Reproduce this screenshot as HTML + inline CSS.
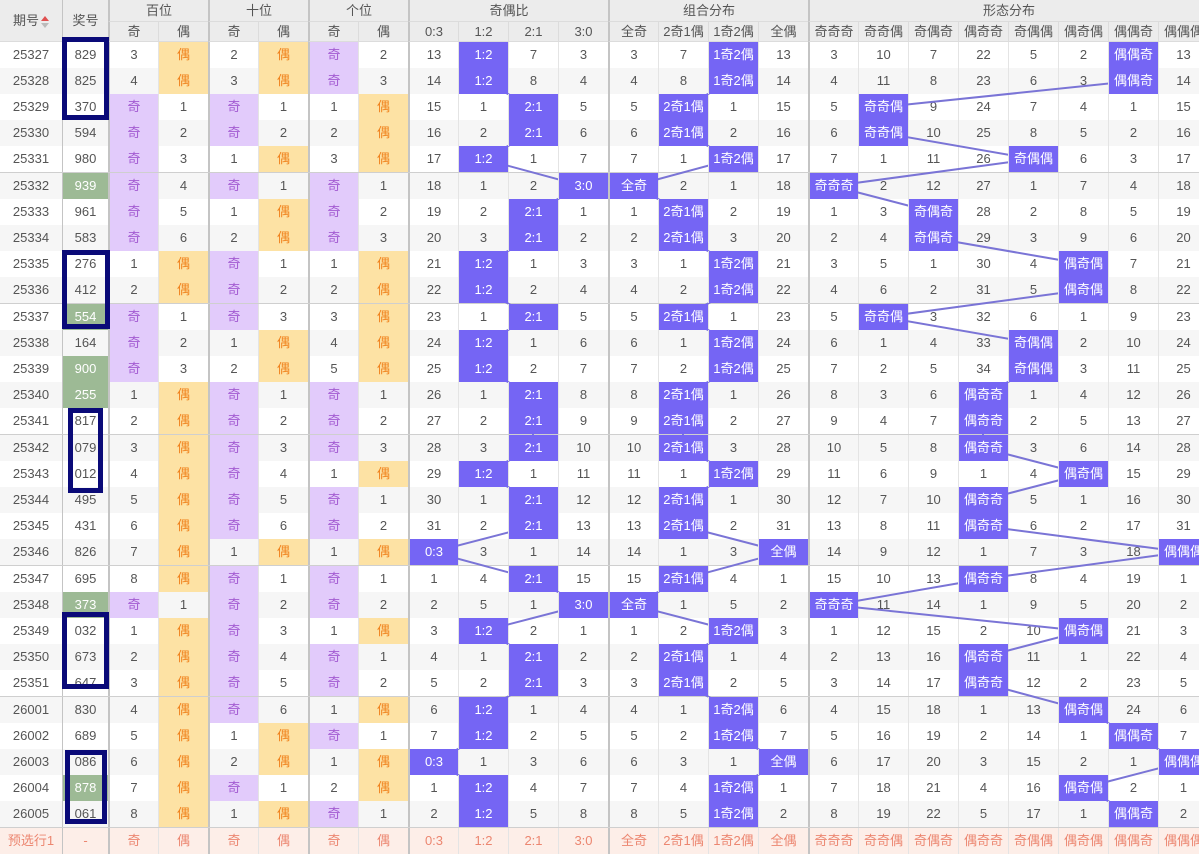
<!DOCTYPE html>
<html><head><meta charset="utf-8"><style>
*{margin:0;padding:0;box-sizing:border-box}
body{width:1199px;height:857px;overflow:hidden;background:#fff;font-family:"Liberation Sans","Noto Sans CJK SC",sans-serif;font-size:13px;color:#555;position:relative}
.hd{position:absolute;background:#ececec;text-align:center;color:#555;border-left:1px solid #dcdcdc;border-bottom:1px solid #dcdcdc}
.hd.g{border-left:2px solid #c4c4c4}
#body{position:absolute;left:0;top:42px;width:1220px}
.r{display:flex;height:26px;background:#fff}
.r:nth-child(even){background:#f6f6f6}
.r.e{height:27px;border-bottom:1px solid #cfcfcf}
.r b{font-weight:normal;width:50px;flex:none;text-align:center;line-height:26px;border-left:1px solid #e4e4e4;white-space:nowrap;overflow:hidden}
.r b:nth-child(1){width:62px;border-left:none}
.r b:nth-child(2){width:46px;border-left:1px solid #c4c4c4}
.r b:nth-child(3),.r b:nth-child(5),.r b:nth-child(7),.r b:nth-child(9),.r b:nth-child(13),.r b:nth-child(17){border-left:2px solid #c4c4c4}
.r b.p{background:#e2cbfb;color:#a35bd2}
.r b.y{background:#fde2a4;color:#f0821c}
.r b.h{background:#7565f4;color:#fff;position:relative;z-index:3}
.r b.gr{background:#9dba95;color:#fff}
.r.ps{background:#fdeee8!important;color:#ec8670;border-top:1px solid #cfcfcf;height:27px}
.box{position:absolute;border:5px solid #0a0a78;z-index:4}
svg{position:absolute;left:0;top:0;z-index:2}
</style></head><body>
<div class="hd" style="left:0;top:0;width:62px;height:42px;line-height:42px;border-left:none">期号<span style="display:inline-block;width:8px;height:12px;position:relative;vertical-align:middle;margin-left:2px"><span style="position:absolute;left:0;top:0;border:4px solid transparent;border-bottom:5px solid #e05050;border-top:none"></span><span style="position:absolute;left:0;top:7px;border:4px solid transparent;border-top:5px solid #bbb;border-bottom:none"></span></span></div>
<div class="hd" style="left:62px;top:0;width:46px;height:42px;line-height:42px;border-left:1px solid #c4c4c4">奖号</div>
<div class="hd g" style="left:108px;top:0;width:100px;height:22px;line-height:22px">百位</div>
<div class="hd g" style="left:208px;top:0;width:100px;height:22px;line-height:22px">十位</div>
<div class="hd g" style="left:308px;top:0;width:100px;height:22px;line-height:22px">个位</div>
<div class="hd g" style="left:408px;top:0;width:200px;height:22px;line-height:22px">奇偶比</div>
<div class="hd g" style="left:608px;top:0;width:200px;height:22px;line-height:22px">组合分布</div>
<div class="hd g" style="left:808px;top:0;width:400px;height:22px;line-height:22px">形态分布</div>
<div style="position:absolute;left:108px;top:22px;height:20px;display:flex;background:#ececec;line-height:20px;text-align:center;color:#555">
<div class="hd g" style="position:static;width:50px;height:20px">奇</div><div class="hd" style="position:static;width:50px;height:20px">偶</div>
<div class="hd g" style="position:static;width:50px;height:20px">奇</div><div class="hd" style="position:static;width:50px;height:20px">偶</div>
<div class="hd g" style="position:static;width:50px;height:20px">奇</div><div class="hd" style="position:static;width:50px;height:20px">偶</div>
<div class="hd g" style="position:static;width:50px;height:20px">0:3</div><div class="hd" style="position:static;width:50px;height:20px">1:2</div><div class="hd" style="position:static;width:50px;height:20px">2:1</div><div class="hd" style="position:static;width:50px;height:20px">3:0</div>
<div class="hd g" style="position:static;width:50px;height:20px">全奇</div><div class="hd" style="position:static;width:50px;height:20px">2奇1偶</div><div class="hd" style="position:static;width:50px;height:20px">1奇2偶</div><div class="hd" style="position:static;width:50px;height:20px">全偶</div>
<div class="hd g" style="position:static;width:50px;height:20px">奇奇奇</div><div class="hd" style="position:static;width:50px;height:20px">奇奇偶</div><div class="hd" style="position:static;width:50px;height:20px">奇偶奇</div><div class="hd" style="position:static;width:50px;height:20px">偶奇奇</div><div class="hd" style="position:static;width:50px;height:20px">奇偶偶</div><div class="hd" style="position:static;width:50px;height:20px">偶奇偶</div><div class="hd" style="position:static;width:50px;height:20px">偶偶奇</div><div class="hd" style="position:static;width:50px;height:20px">偶偶偶</div>
</div>
<div id="body">
<div class="r"><b>25327</b><b>829</b><b>3</b><b class=y>偶</b><b>2</b><b class=y>偶</b><b class=p>奇</b><b>2</b><b>13</b><b class=h>1:2</b><b>7</b><b>3</b><b>3</b><b>7</b><b class=h>1奇2偶</b><b>13</b><b>3</b><b>10</b><b>7</b><b>22</b><b>5</b><b>2</b><b class=h>偶偶奇</b><b>13</b></div>
<div class="r"><b>25328</b><b>825</b><b>4</b><b class=y>偶</b><b>3</b><b class=y>偶</b><b class=p>奇</b><b>3</b><b>14</b><b class=h>1:2</b><b>8</b><b>4</b><b>4</b><b>8</b><b class=h>1奇2偶</b><b>14</b><b>4</b><b>11</b><b>8</b><b>23</b><b>6</b><b>3</b><b class=h>偶偶奇</b><b>14</b></div>
<div class="r"><b>25329</b><b>370</b><b class=p>奇</b><b>1</b><b class=p>奇</b><b>1</b><b>1</b><b class=y>偶</b><b>15</b><b>1</b><b class=h>2:1</b><b>5</b><b>5</b><b class=h>2奇1偶</b><b>1</b><b>15</b><b>5</b><b class=h>奇奇偶</b><b>9</b><b>24</b><b>7</b><b>4</b><b>1</b><b>15</b></div>
<div class="r"><b>25330</b><b>594</b><b class=p>奇</b><b>2</b><b class=p>奇</b><b>2</b><b>2</b><b class=y>偶</b><b>16</b><b>2</b><b class=h>2:1</b><b>6</b><b>6</b><b class=h>2奇1偶</b><b>2</b><b>16</b><b>6</b><b class=h>奇奇偶</b><b>10</b><b>25</b><b>8</b><b>5</b><b>2</b><b>16</b></div>
<div class="r e"><b>25331</b><b>980</b><b class=p>奇</b><b>3</b><b>1</b><b class=y>偶</b><b>3</b><b class=y>偶</b><b>17</b><b class=h>1:2</b><b>1</b><b>7</b><b>7</b><b>1</b><b class=h>1奇2偶</b><b>17</b><b>7</b><b>1</b><b>11</b><b>26</b><b class=h>奇偶偶</b><b>6</b><b>3</b><b>17</b></div>
<div class="r"><b>25332</b><b class=gr>939</b><b class=p>奇</b><b>4</b><b class=p>奇</b><b>1</b><b class=p>奇</b><b>1</b><b>18</b><b>1</b><b>2</b><b class=h>3:0</b><b class=h>全奇</b><b>2</b><b>1</b><b>18</b><b class=h>奇奇奇</b><b>2</b><b>12</b><b>27</b><b>1</b><b>7</b><b>4</b><b>18</b></div>
<div class="r"><b>25333</b><b>961</b><b class=p>奇</b><b>5</b><b>1</b><b class=y>偶</b><b class=p>奇</b><b>2</b><b>19</b><b>2</b><b class=h>2:1</b><b>1</b><b>1</b><b class=h>2奇1偶</b><b>2</b><b>19</b><b>1</b><b>3</b><b class=h>奇偶奇</b><b>28</b><b>2</b><b>8</b><b>5</b><b>19</b></div>
<div class="r"><b>25334</b><b>583</b><b class=p>奇</b><b>6</b><b>2</b><b class=y>偶</b><b class=p>奇</b><b>3</b><b>20</b><b>3</b><b class=h>2:1</b><b>2</b><b>2</b><b class=h>2奇1偶</b><b>3</b><b>20</b><b>2</b><b>4</b><b class=h>奇偶奇</b><b>29</b><b>3</b><b>9</b><b>6</b><b>20</b></div>
<div class="r"><b>25335</b><b>276</b><b>1</b><b class=y>偶</b><b class=p>奇</b><b>1</b><b>1</b><b class=y>偶</b><b>21</b><b class=h>1:2</b><b>1</b><b>3</b><b>3</b><b>1</b><b class=h>1奇2偶</b><b>21</b><b>3</b><b>5</b><b>1</b><b>30</b><b>4</b><b class=h>偶奇偶</b><b>7</b><b>21</b></div>
<div class="r e"><b>25336</b><b>412</b><b>2</b><b class=y>偶</b><b class=p>奇</b><b>2</b><b>2</b><b class=y>偶</b><b>22</b><b class=h>1:2</b><b>2</b><b>4</b><b>4</b><b>2</b><b class=h>1奇2偶</b><b>22</b><b>4</b><b>6</b><b>2</b><b>31</b><b>5</b><b class=h>偶奇偶</b><b>8</b><b>22</b></div>
<div class="r"><b>25337</b><b class=gr>554</b><b class=p>奇</b><b>1</b><b class=p>奇</b><b>3</b><b>3</b><b class=y>偶</b><b>23</b><b>1</b><b class=h>2:1</b><b>5</b><b>5</b><b class=h>2奇1偶</b><b>1</b><b>23</b><b>5</b><b class=h>奇奇偶</b><b>3</b><b>32</b><b>6</b><b>1</b><b>9</b><b>23</b></div>
<div class="r"><b>25338</b><b>164</b><b class=p>奇</b><b>2</b><b>1</b><b class=y>偶</b><b>4</b><b class=y>偶</b><b>24</b><b class=h>1:2</b><b>1</b><b>6</b><b>6</b><b>1</b><b class=h>1奇2偶</b><b>24</b><b>6</b><b>1</b><b>4</b><b>33</b><b class=h>奇偶偶</b><b>2</b><b>10</b><b>24</b></div>
<div class="r"><b>25339</b><b class=gr>900</b><b class=p>奇</b><b>3</b><b>2</b><b class=y>偶</b><b>5</b><b class=y>偶</b><b>25</b><b class=h>1:2</b><b>2</b><b>7</b><b>7</b><b>2</b><b class=h>1奇2偶</b><b>25</b><b>7</b><b>2</b><b>5</b><b>34</b><b class=h>奇偶偶</b><b>3</b><b>11</b><b>25</b></div>
<div class="r"><b>25340</b><b class=gr>255</b><b>1</b><b class=y>偶</b><b class=p>奇</b><b>1</b><b class=p>奇</b><b>1</b><b>26</b><b>1</b><b class=h>2:1</b><b>8</b><b>8</b><b class=h>2奇1偶</b><b>1</b><b>26</b><b>8</b><b>3</b><b>6</b><b class=h>偶奇奇</b><b>1</b><b>4</b><b>12</b><b>26</b></div>
<div class="r e"><b>25341</b><b>817</b><b>2</b><b class=y>偶</b><b class=p>奇</b><b>2</b><b class=p>奇</b><b>2</b><b>27</b><b>2</b><b class=h>2:1</b><b>9</b><b>9</b><b class=h>2奇1偶</b><b>2</b><b>27</b><b>9</b><b>4</b><b>7</b><b class=h>偶奇奇</b><b>2</b><b>5</b><b>13</b><b>27</b></div>
<div class="r"><b>25342</b><b>079</b><b>3</b><b class=y>偶</b><b class=p>奇</b><b>3</b><b class=p>奇</b><b>3</b><b>28</b><b>3</b><b class=h>2:1</b><b>10</b><b>10</b><b class=h>2奇1偶</b><b>3</b><b>28</b><b>10</b><b>5</b><b>8</b><b class=h>偶奇奇</b><b>3</b><b>6</b><b>14</b><b>28</b></div>
<div class="r"><b>25343</b><b>012</b><b>4</b><b class=y>偶</b><b class=p>奇</b><b>4</b><b>1</b><b class=y>偶</b><b>29</b><b class=h>1:2</b><b>1</b><b>11</b><b>11</b><b>1</b><b class=h>1奇2偶</b><b>29</b><b>11</b><b>6</b><b>9</b><b>1</b><b>4</b><b class=h>偶奇偶</b><b>15</b><b>29</b></div>
<div class="r"><b>25344</b><b>495</b><b>5</b><b class=y>偶</b><b class=p>奇</b><b>5</b><b class=p>奇</b><b>1</b><b>30</b><b>1</b><b class=h>2:1</b><b>12</b><b>12</b><b class=h>2奇1偶</b><b>1</b><b>30</b><b>12</b><b>7</b><b>10</b><b class=h>偶奇奇</b><b>5</b><b>1</b><b>16</b><b>30</b></div>
<div class="r"><b>25345</b><b>431</b><b>6</b><b class=y>偶</b><b class=p>奇</b><b>6</b><b class=p>奇</b><b>2</b><b>31</b><b>2</b><b class=h>2:1</b><b>13</b><b>13</b><b class=h>2奇1偶</b><b>2</b><b>31</b><b>13</b><b>8</b><b>11</b><b class=h>偶奇奇</b><b>6</b><b>2</b><b>17</b><b>31</b></div>
<div class="r e"><b>25346</b><b>826</b><b>7</b><b class=y>偶</b><b>1</b><b class=y>偶</b><b>1</b><b class=y>偶</b><b class=h>0:3</b><b>3</b><b>1</b><b>14</b><b>14</b><b>1</b><b>3</b><b class=h>全偶</b><b>14</b><b>9</b><b>12</b><b>1</b><b>7</b><b>3</b><b>18</b><b class=h>偶偶偶</b></div>
<div class="r"><b>25347</b><b>695</b><b>8</b><b class=y>偶</b><b class=p>奇</b><b>1</b><b class=p>奇</b><b>1</b><b>1</b><b>4</b><b class=h>2:1</b><b>15</b><b>15</b><b class=h>2奇1偶</b><b>4</b><b>1</b><b>15</b><b>10</b><b>13</b><b class=h>偶奇奇</b><b>8</b><b>4</b><b>19</b><b>1</b></div>
<div class="r"><b>25348</b><b class=gr>373</b><b class=p>奇</b><b>1</b><b class=p>奇</b><b>2</b><b class=p>奇</b><b>2</b><b>2</b><b>5</b><b>1</b><b class=h>3:0</b><b class=h>全奇</b><b>1</b><b>5</b><b>2</b><b class=h>奇奇奇</b><b>11</b><b>14</b><b>1</b><b>9</b><b>5</b><b>20</b><b>2</b></div>
<div class="r"><b>25349</b><b>032</b><b>1</b><b class=y>偶</b><b class=p>奇</b><b>3</b><b>1</b><b class=y>偶</b><b>3</b><b class=h>1:2</b><b>2</b><b>1</b><b>1</b><b>2</b><b class=h>1奇2偶</b><b>3</b><b>1</b><b>12</b><b>15</b><b>2</b><b>10</b><b class=h>偶奇偶</b><b>21</b><b>3</b></div>
<div class="r"><b>25350</b><b>673</b><b>2</b><b class=y>偶</b><b class=p>奇</b><b>4</b><b class=p>奇</b><b>1</b><b>4</b><b>1</b><b class=h>2:1</b><b>2</b><b>2</b><b class=h>2奇1偶</b><b>1</b><b>4</b><b>2</b><b>13</b><b>16</b><b class=h>偶奇奇</b><b>11</b><b>1</b><b>22</b><b>4</b></div>
<div class="r e"><b>25351</b><b>647</b><b>3</b><b class=y>偶</b><b class=p>奇</b><b>5</b><b class=p>奇</b><b>2</b><b>5</b><b>2</b><b class=h>2:1</b><b>3</b><b>3</b><b class=h>2奇1偶</b><b>2</b><b>5</b><b>3</b><b>14</b><b>17</b><b class=h>偶奇奇</b><b>12</b><b>2</b><b>23</b><b>5</b></div>
<div class="r"><b>26001</b><b>830</b><b>4</b><b class=y>偶</b><b class=p>奇</b><b>6</b><b>1</b><b class=y>偶</b><b>6</b><b class=h>1:2</b><b>1</b><b>4</b><b>4</b><b>1</b><b class=h>1奇2偶</b><b>6</b><b>4</b><b>15</b><b>18</b><b>1</b><b>13</b><b class=h>偶奇偶</b><b>24</b><b>6</b></div>
<div class="r"><b>26002</b><b>689</b><b>5</b><b class=y>偶</b><b>1</b><b class=y>偶</b><b class=p>奇</b><b>1</b><b>7</b><b class=h>1:2</b><b>2</b><b>5</b><b>5</b><b>2</b><b class=h>1奇2偶</b><b>7</b><b>5</b><b>16</b><b>19</b><b>2</b><b>14</b><b>1</b><b class=h>偶偶奇</b><b>7</b></div>
<div class="r"><b>26003</b><b>086</b><b>6</b><b class=y>偶</b><b>2</b><b class=y>偶</b><b>1</b><b class=y>偶</b><b class=h>0:3</b><b>1</b><b>3</b><b>6</b><b>6</b><b>3</b><b>1</b><b class=h>全偶</b><b>6</b><b>17</b><b>20</b><b>3</b><b>15</b><b>2</b><b>1</b><b class=h>偶偶偶</b></div>
<div class="r"><b>26004</b><b class=gr>878</b><b>7</b><b class=y>偶</b><b class=p>奇</b><b>1</b><b>2</b><b class=y>偶</b><b>1</b><b class=h>1:2</b><b>4</b><b>7</b><b>7</b><b>4</b><b class=h>1奇2偶</b><b>1</b><b>7</b><b>18</b><b>21</b><b>4</b><b>16</b><b class=h>偶奇偶</b><b>2</b><b>1</b></div>
<div class="r"><b>26005</b><b>061</b><b>8</b><b class=y>偶</b><b>1</b><b class=y>偶</b><b class=p>奇</b><b>1</b><b>2</b><b class=h>1:2</b><b>5</b><b>8</b><b>8</b><b>5</b><b class=h>1奇2偶</b><b>2</b><b>8</b><b>19</b><b>22</b><b>5</b><b>17</b><b>1</b><b class=h>偶偶奇</b><b>2</b></div>
<div class="r ps"><b>预选行1</b><b>-</b><b>奇</b><b>偶</b><b>奇</b><b>偶</b><b>奇</b><b>偶</b><b>0:3</b><b>1:2</b><b>2:1</b><b>3:0</b><b>全奇</b><b>2奇1偶</b><b>1奇2偶</b><b>全偶</b><b>奇奇奇</b><b>奇奇偶</b><b>奇偶奇</b><b>偶奇奇</b><b>奇偶偶</b><b>偶奇偶</b><b>偶偶奇</b><b>偶偶偶</b></div>
</div>
<svg width="1199" height="857"><g fill="none" stroke="#7a74d6" stroke-width="2">
<polyline points="483,55 483,81 533,107 533,133 483,159 583,186 533,212 533,238 483,264 483,290 533,317 483,343 483,369 533,395 533,421 533,448 483,474 533,500 533,526 433,552 533,579 583,605 483,631 533,657 533,683 483,710 483,736 433,762 483,788 483,814"/>
<polyline points="733,55 733,81 683,107 683,133 733,159 633,186 683,212 683,238 733,264 733,290 683,317 733,343 733,369 683,395 683,421 683,448 733,474 683,500 683,526 783,552 683,579 633,605 733,631 683,657 683,683 733,710 733,736 783,762 733,788 733,814"/>
<polyline points="1133,55 1133,81 883,107 883,133 1033,159 833,186 933,212 933,238 1083,264 1083,290 883,317 1033,343 1033,369 983,395 983,421 983,448 1083,474 983,500 983,526 1183,552 983,579 833,605 1083,631 983,657 983,683 1083,710 1133,736 1183,762 1083,788 1133,814"/>
</g></svg>
<div class="box" style="left:62px;top:37px;width:47px;height:83px"></div>
<div class="box" style="left:62px;top:250px;width:48px;height:79px"></div>
<div class="box" style="left:68px;top:408px;width:35px;height:85px"></div>
<div class="box" style="left:62px;top:612px;width:47px;height:77px"></div>
<div class="box" style="left:65px;top:750px;width:42px;height:74px"></div>
</body></html>
